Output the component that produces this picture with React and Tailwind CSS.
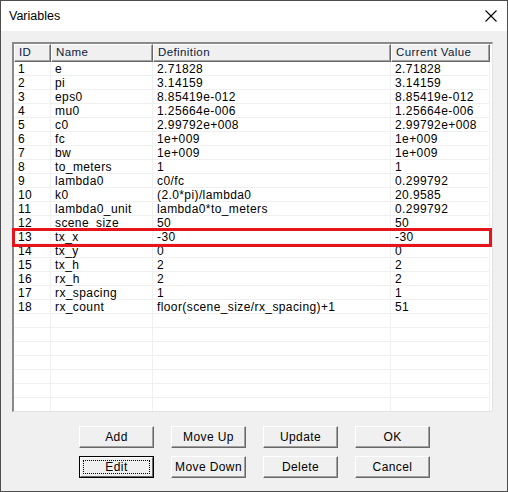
import React from 'react';

const rows = [
    ['1', 'e', '2.71828', '2.71828'],
    ['2', 'pi', '3.14159', '3.14159'],
    ['3', 'eps0', '8.85419e-012', '8.85419e-012'],
    ['4', 'mu0', '1.25664e-006', '1.25664e-006'],
    ['5', 'c0', '2.99792e+008', '2.99792e+008'],
    ['6', 'fc', '1e+009', '1e+009'],
    ['7', 'bw', '1e+009', '1e+009'],
    ['8', 'to_meters', '1', '1'],
    ['9', 'lambda0', 'c0/fc', '0.299792'],
    ['10', 'k0', '(2.0*pi)/lambda0', '20.9585'],
    ['11', 'lambda0_unit', 'lambda0*to_meters', '0.299792'],
    ['12', 'scene_size', '50', '50'],
    ['13', 'tx_x', '-30', '-30'],
    ['14', 'tx_y', '0', '0'],
    ['15', 'tx_h', '2', '2'],
    ['16', 'rx_h', '2', '2'],
    ['17', 'rx_spacing', '1', '1'],
    ['18', 'rx_count', 'floor(scene_size/rx_spacing)+1', '51'],
    ['', '', '', ''],
    ['', '', '', ''],
    ['', '', '', ''],
    ['', '', '', ''],
    ['', '', '', ''],
    ['', '', '', ''],
    ['', '', '', ''],
];

const cols = ['w-[37px]', 'w-[102px]', 'w-[238px]', 'w-[99px]'];
const headers = ['ID', 'Name', 'Definition', 'Current Value'];

function Btn({ children, focused }) {
    if (focused) {
        return (
            <div className="w-[75px] h-[22px] border border-black">
                <div className="h-full border-t border-l border-t-white border-l-white border-r border-b border-r-[#696969] border-b-[#696969] bg-[#f0f0f0] p-[2px]">
                    <div className="h-full border border-dotted border-black flex items-center justify-center">
                        {children}
                    </div>
                </div>
            </div>
        );
    }
    return (
        <div className="w-[75px] h-[22px] border-t border-l border-t-white border-l-white border-r border-b border-r-[#696969] border-b-[#696969] bg-[#f0f0f0] shadow-[inset_-1px_-1px_0_#a0a0a0] flex items-center justify-center">
            {children}
        </div>
    );
}

export default function App() {
    return (
        <div
            className="w-[508px] h-[492px] border border-[#4d4d4d] bg-[#f0f0f0] flex flex-col text-black tracking-[0.4px]"
            style={{ fontFamily: '"Liberation Sans", Arial, sans-serif' }}
        >
            {/* title bar */}
            <div className="h-[30px] bg-white flex items-center justify-between pl-[8px] pr-[10px] shrink-0">
                <span className="text-[12.5px] tracking-normal">Variables</span>
                <svg width="12" height="12" viewBox="0 0 12 12">
                    <path d="M0.5 0.5 L11.5 11.5 M11.5 0.5 L0.5 11.5" stroke="#000" strokeWidth="1.1" fill="none" />
                </svg>
            </div>

            {/* list */}
            <div className="pl-[11px] pt-[11px]">
                <div className="relative w-[481px] h-[370px] bg-white border-t-2 border-l-2 border-t-[#8a8a8a] border-l-[#8a8a8a] border-r border-b border-r-[#e3e3e3] border-b-[#e3e3e3]">
                    <div className="h-full overflow-hidden">
                        <div className="flex h-[18px]">
                            {headers.map((h, i) => (
                                <div
                                    key={h}
                                    className={`${cols[i]} h-full bg-[#f0f0f0] border-t border-l border-t-white border-l-white border-r border-b border-r-[#696969] border-b-[#696969] shadow-[inset_-1px_-1px_0_#a0a0a0] flex items-center pl-[4px] text-[11.5px] text-[#0a1a40]`}
                                >
                                    {h}
                                </div>
                            ))}
                        </div>
                        {rows.map((r, ri) => (
                            <div key={ri} className="flex h-[14px]">
                                {r.map((c, ci) => (
                                    <div
                                        key={ci}
                                        className={`${cols[ci]} h-full shrink-0 border-r border-b border-[#f0f0f0] pl-[4px] pt-[1px] text-[12px] leading-[13px] whitespace-nowrap`}
                                    >
                                        {c}
                                    </div>
                                ))}
                            </div>
                        ))}
                    </div>
                    {/* highlight */}
                    <div className="absolute left-[-2px] top-[184px] w-[480px] h-[19px] border-[3px] border-[#e8141c]" />
                </div>
            </div>

            {/* buttons */}
            <div className="pl-[78px] pt-[14px] grid grid-cols-[75px_75px_75px_75px] gap-x-[17px] gap-y-[8px] text-[12px]">
                <Btn>Add</Btn>
                <Btn>Move Up</Btn>
                <Btn>Update</Btn>
                <Btn>OK</Btn>
                <Btn focused>Edit</Btn>
                <Btn>Move Down</Btn>
                <Btn>Delete</Btn>
                <Btn>Cancel</Btn>
            </div>
        </div>
    );
}
